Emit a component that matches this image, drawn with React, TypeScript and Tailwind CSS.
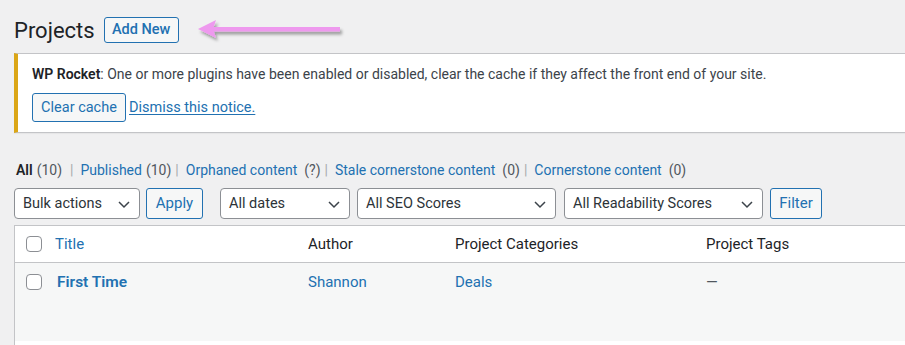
import React from "react";

const font = { fontFamily: "Roboto, 'Noto Sans', sans-serif" };

// little chevron used inside the selects
function Chevron() {
  return (
    <svg width="14" height="14" viewBox="0 0 14 14" className="shrink-0">
      <polyline points="2,5 7,10 12,5" fill="none" stroke="#3c434a" strokeWidth="1.5" />
    </svg>
  );
}

function Select({ label, width }: { label: string; width: string }) {
  return (
    <div
      className={`${width} h-[31px] flex items-center justify-between pl-[8px] pr-[8px] bg-white border border-[#8c8f94] rounded-[4px] text-[14.5px] text-[#2c3338]`}
    >
      <span>{label}</span>
      <Chevron />
    </div>
  );
}

function Checkbox() {
  return <div className="w-[16px] h-[16px] rounded-[4px] border border-[#8c8f94] bg-white" />;
}

export default function App() {
  // wide = count printed with a leading space, like the yoast views
  const views = [
    { label: "Published", count: "(10)", wide: false },
    { label: "Orphaned content", count: "(?)", wide: true },
    { label: "Stale cornerstone content", count: "(0)", wide: true },
    { label: "Cornerstone content", count: "(0)", wide: true },
  ];

  return (
    <div className="w-[905px] h-[345px] overflow-hidden bg-[#f0f0f1] text-[#1d2327]" style={font}>
      <div className="pl-[14px] w-[930px]">
        {/* heading */}
        <div className="flex items-center h-[26px] mt-[17px]">
          <h1 className="text-[22px] leading-none text-[#1d2327] mt-[1px]">Projects</h1>
          <button className="ml-[9px] h-[26px] w-[75px] border border-[#2271b1] rounded-[3px] bg-[#f6f7f7] text-[#2271b1] text-[14.5px] font-medium">
            Add New
          </button>
          {/* annotation arrow */}
          <svg width="160" height="26" viewBox="0 0 160 26" className="ml-[19px]">
            <defs>
              <filter id="sh" x="-10%" y="-50%" width="130%" height="220%">
                <feDropShadow dx="2" dy="3" stdDeviation="1.5" floodColor="#000" floodOpacity="0.35" />
              </filter>
            </defs>
            <g filter="url(#sh)">
              <polygon points="0,12 18,3 15,12 18,21" fill="#ee99ee" />
              <rect x="14" y="10" width="128" height="4.5" fill="#ee99ee" />
            </g>
          </svg>
        </div>

        {/* WP Rocket notice */}
        <div className="mt-[10px] h-[80px] bg-white border border-[#c3c4c7] border-l-[4px] border-l-[#dba617] shadow-[0_1px_1px_rgba(0,0,0,0.04)] pl-[14px]">
          <p className="text-[14px] mt-[10px] leading-[20px] text-[#3c434a]">
            <b className="font-semibold text-[#1d2327]">WP Rocket</b>: One or more plugins have been enabled or disabled,
            clear the cache if they affect the front end of your site.
          </p>
          <div className="flex items-center mt-[9px]">
            <button className="h-[29px] w-[94px] border border-[#2271b1] rounded-[3px] bg-[#f6f7f7] text-[#2271b1] text-[14.5px]">
              Clear cache
            </button>
            <a className="ml-[3px] text-[14.5px] text-[#2271b1] underline underline-offset-2">Dismiss this notice.</a>
          </div>
        </div>

        {/* status views */}
        <div className="mt-[27px] text-[14px] text-[#50575e] flex items-center h-[20px] pl-[2px]">
          <span className="font-semibold text-[#1d2327]">All</span>
          <span className="ml-[4px]">(10)</span>
          {views.map((v) => (
            <React.Fragment key={v.label}>
              <span className={`${v.wide ? "ml-[4px]" : "ml-[8px]"} mr-[7px] text-[#a7aaad]`}>|</span>
              <span className="text-[#2271b1]">{v.label}</span>
              <span className={v.wide ? "ml-[7px]" : "ml-[4px]"}>{v.count}</span>
            </React.Fragment>
          ))}
        </div>

        {/* filters */}
        <div className="flex items-center mt-[8px] h-[31px]">
          <Select label="Bulk actions" width="w-[126px]" />
          <button className="ml-[6px] h-[31px] w-[57px] border border-[#2271b1] rounded-[3px] bg-[#f6f7f7] text-[#2271b1] text-[15px]">
            Apply
          </button>
          <div className="ml-[17px]">
            <Select label="All dates" width="w-[130px]" />
          </div>
          <div className="ml-[7px]">
            <Select label="All SEO Scores" width="w-[199px]" />
          </div>
          <div className="ml-[8px]">
            <Select label="All Readability Scores" width="w-[199px]" />
          </div>
          <button className="ml-[7px] h-[31px] w-[52px] border border-[#2271b1] rounded-[3px] bg-[#f6f7f7] text-[#2271b1] text-[15px]">
            Filter
          </button>
        </div>

        {/* table */}
        <div className="mt-[6px] border border-[#c3c4c7] bg-white">
          <div className="flex items-center h-[37px] border-b border-[#c3c4c7] text-[15px]">
            <div className="w-[40px] pl-[11px]">
              <Checkbox />
            </div>
            <div className="w-[253px] text-[#2271b1]">Title</div>
            <div className="w-[147px]">Author</div>
            <div className="w-[251px]">Project Categories</div>
            <div>Project Tags</div>
          </div>
          <div className="h-[78px] bg-[#f6f7f7] flex items-start pt-[10px] text-[15px]">
            <div className="w-[42px] pl-[11px] pt-[1px]">
              <Checkbox />
            </div>
            <div className="w-[251px] text-[#2271b1] font-semibold text-[15.5px] leading-[18px]">First Time</div>
            <div className="w-[147px] text-[#2271b1] leading-[18px]">Shannon</div>
            <div className="w-[251px] text-[#2271b1] leading-[18px]">Deals</div>
            <div className="text-[#50575e] leading-[18px]">—</div>
          </div>
          <div className="h-[20px]" />
        </div>
      </div>
    </div>
  );
}
